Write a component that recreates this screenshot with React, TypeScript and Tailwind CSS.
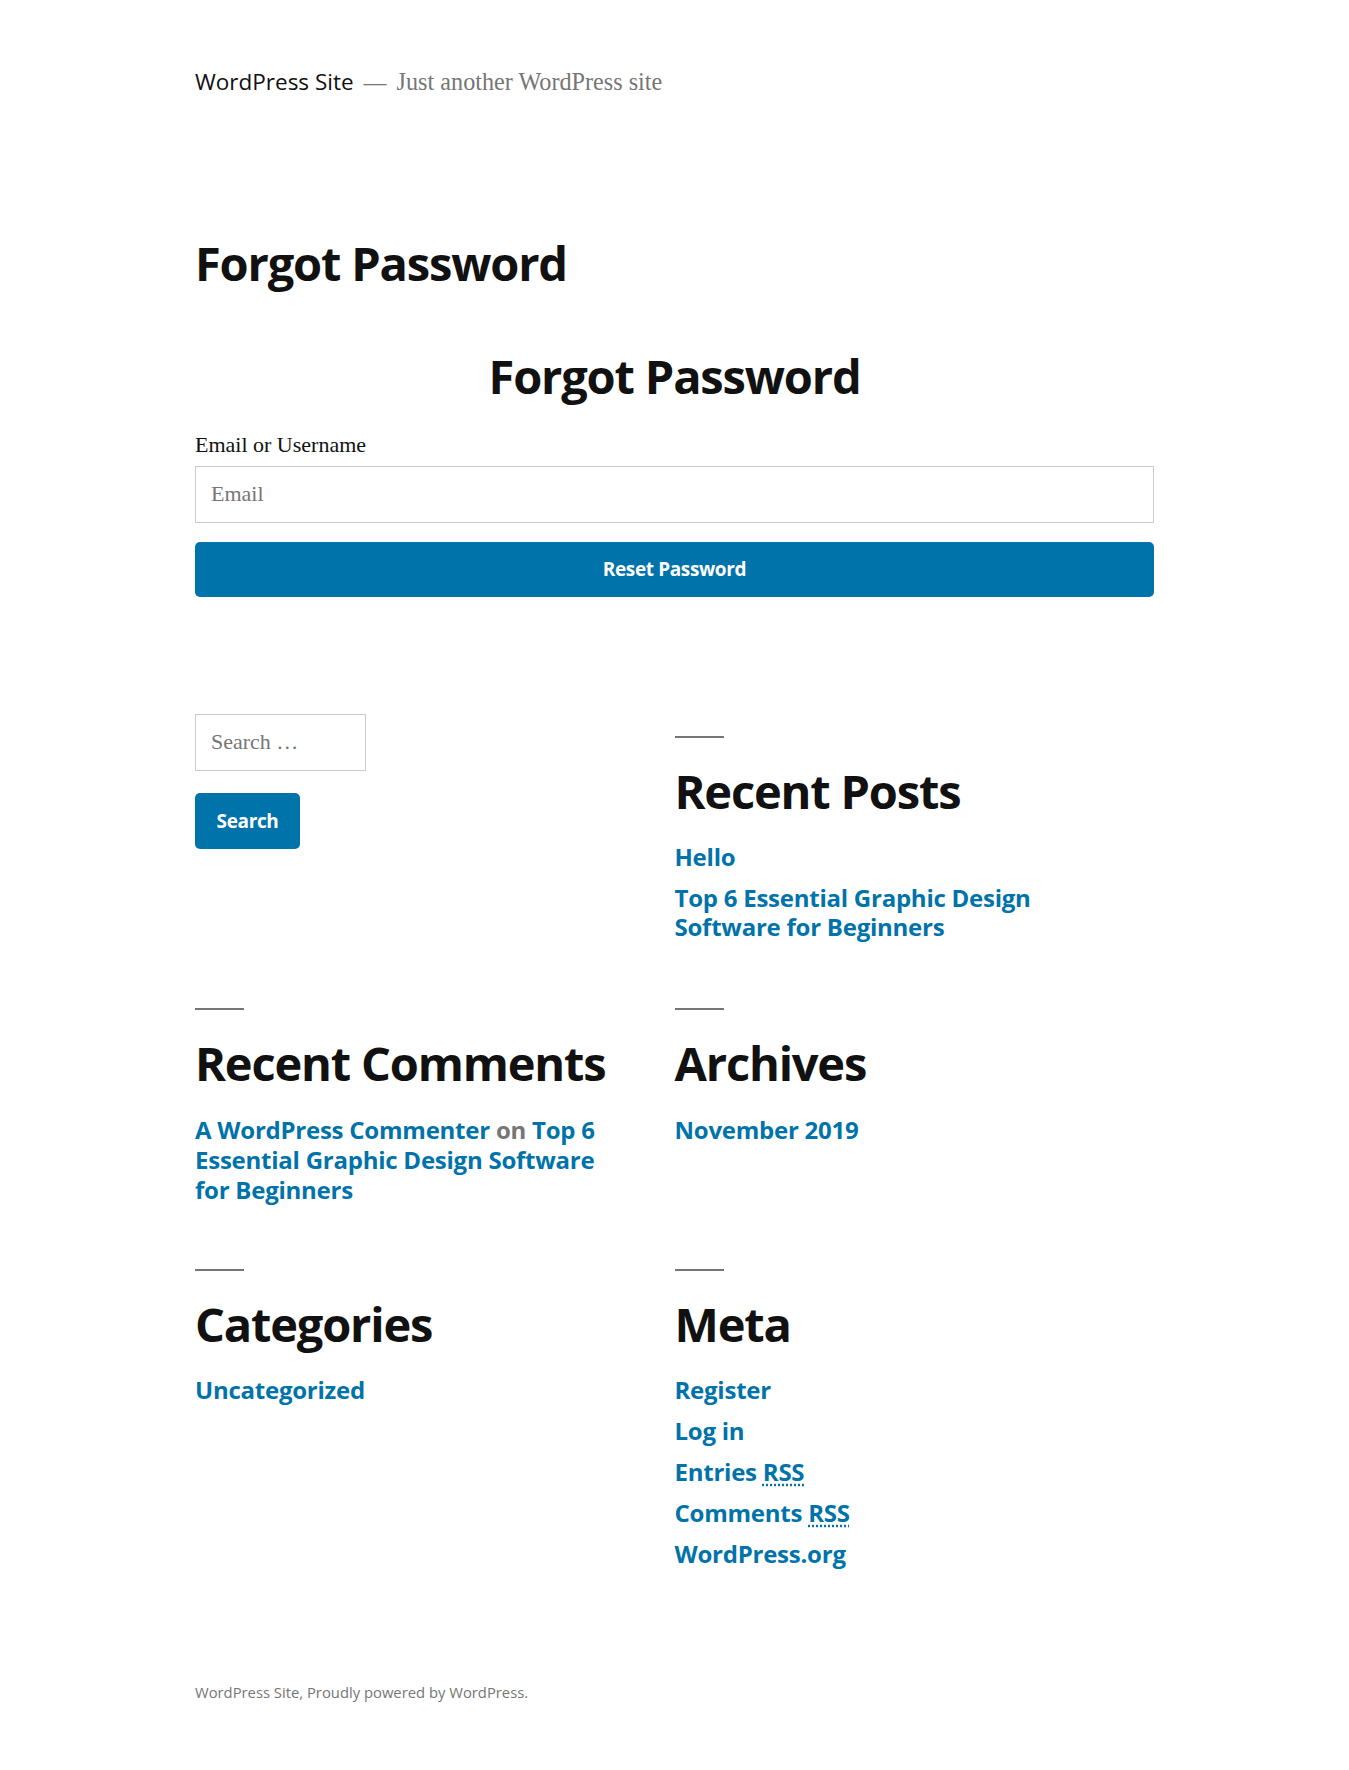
import React from 'react';

const sans = "font-['Open_Sans',sans-serif]";
const serif = "font-['Liberation_Serif',serif]";

const WidgetTitle: React.FC<{ children: React.ReactNode }> = ({ children }) => (
  <div>
    <div className="mt-[22px] h-[2px] w-[49px] bg-[#767676]" />
    <h2 className={`${sans} mt-[25px] mb-[23px] text-[47px] font-bold leading-[1.2] tracking-[-0.025em] text-[#111]`}>
      {children}
    </h2>
  </div>
);

const linkCls = "text-[#0073aa] font-bold";

const App: React.FC = () => {
  return (
    <div className="min-h-screen bg-white text-[#111]">
      <div className="mx-auto w-[959px]">
        <header className="flex items-baseline pt-[64px]">
          <span className={`${sans} text-[22.5px] text-[#111]`}>WordPress Site</span>
          <span className={`${serif} mx-[10px] text-[23px] text-[#767676]`}>—</span>
          <span className={`${serif} text-[24.2px] text-[#767676]`}>Just another WordPress site</span>
        </header>

        <main className="pt-[134px]">
          <h1 className={`${sans} text-[47px] font-bold leading-[1.2] tracking-[-0.025em] text-[#111]`}>Forgot Password</h1>

          <h2 className={`${sans} mt-[57px] text-center text-[47px] font-bold leading-[1.2] tracking-[-0.025em] text-[#111]`}>
            Forgot Password
          </h2>

          <form className="mt-[27px]" onSubmit={(e) => e.preventDefault()}>
            <label htmlFor="email" className={`${serif} block text-[22px] leading-[1.3] text-[#111]`}>
              Email or Username
            </label>
            <input
              id="email"
              type="text"
              placeholder="Email"
              className={`${serif} mt-[6px] block h-[57px] w-full border border-[#ccc] px-[15px] text-[22px] text-[#111] outline-none placeholder:text-[#767676]`}
            />
            <button
              type="submit"
              className={`${sans} mt-[19px] flex h-[55px] w-full items-center justify-center rounded-[5px] bg-[#0073aa] text-[19px] font-bold tracking-[-0.02em] text-white`}
            >
              Reset Password
            </button>
          </form>
        </main>

        <section className="mt-[117px] grid grid-cols-2 gap-y-[45px]">
          {/* search */}
          <div>
            <input
              type="search"
              placeholder="Search …"
              className={`${serif} block h-[57px] w-[171px] border border-[#ccc] px-[15px] text-[22px] outline-none placeholder:text-[#767676]`}
            />
            <button className={`${sans} mt-[22px] h-[56px] w-[105px] rounded-[5px] bg-[#0073aa] text-[19px] font-bold tracking-[-0.02em] text-white`}>
              Search
            </button>
          </div>

          <div className="w-[430px]">
            <WidgetTitle>Recent Posts</WidgetTitle>
            <ul className={`${sans} space-y-[12px] text-[24px] leading-[29px] tracking-[-0.01em]`}>
              <li className={linkCls}>Hello</li>
              <li className={linkCls}>Top 6 Essential Graphic Design Software for Beginners</li>
            </ul>
          </div>

          <div className="w-[425px]">
            <WidgetTitle>Recent Comments</WidgetTitle>
            <ul className={`${sans} -mb-[3px] text-[24px] leading-[30px] tracking-[-0.01em]`}>
              <li className="font-bold">
                <span className="text-[#0073aa]">A WordPress Commenter</span>
                <span className="text-[#767676]"> on </span>
                <span className="text-[#0073aa]">Top 6 Essential Graphic Design Software for Beginners</span>
              </li>
            </ul>
          </div>

          <div className="w-[430px]">
            <WidgetTitle>Archives</WidgetTitle>
            <ul className={`${sans} text-[24px] leading-[29px] tracking-[-0.01em]`}>
              <li className={linkCls}>November 2019</li>
            </ul>
          </div>

          <div className="w-[430px]">
            <WidgetTitle>Categories</WidgetTitle>
            <ul className={`${sans} text-[24px] leading-[29px] tracking-[-0.01em]`}>
              <li className={linkCls}>Uncategorized</li>
            </ul>
          </div>

          <div className="w-[430px]">
            <WidgetTitle>Meta</WidgetTitle>
            <ul className={`${sans} space-y-[12px] text-[24px] leading-[29px] tracking-[-0.01em]`}>
              <li className={linkCls}>Register</li>
              <li className={linkCls}>Log in</li>
              <li className={linkCls}>
                Entries <abbr className="no-underline [text-decoration:underline_dotted] underline-offset-[3px]" title="Really Simple Syndication">RSS</abbr>
              </li>
              <li className={linkCls}>
                Comments <abbr className="no-underline [text-decoration:underline_dotted] underline-offset-[3px]" title="Really Simple Syndication">RSS</abbr>
              </li>
              <li className={linkCls}>WordPress.org</li>
            </ul>
          </div>
        </section>

        <footer className={`${sans} pt-[113px] pb-[68px] text-[14.8px] text-[#767676]`}>
          WordPress Site, Proudly powered by WordPress.
        </footer>
      </div>
    </div>
  );
};

export default App;
